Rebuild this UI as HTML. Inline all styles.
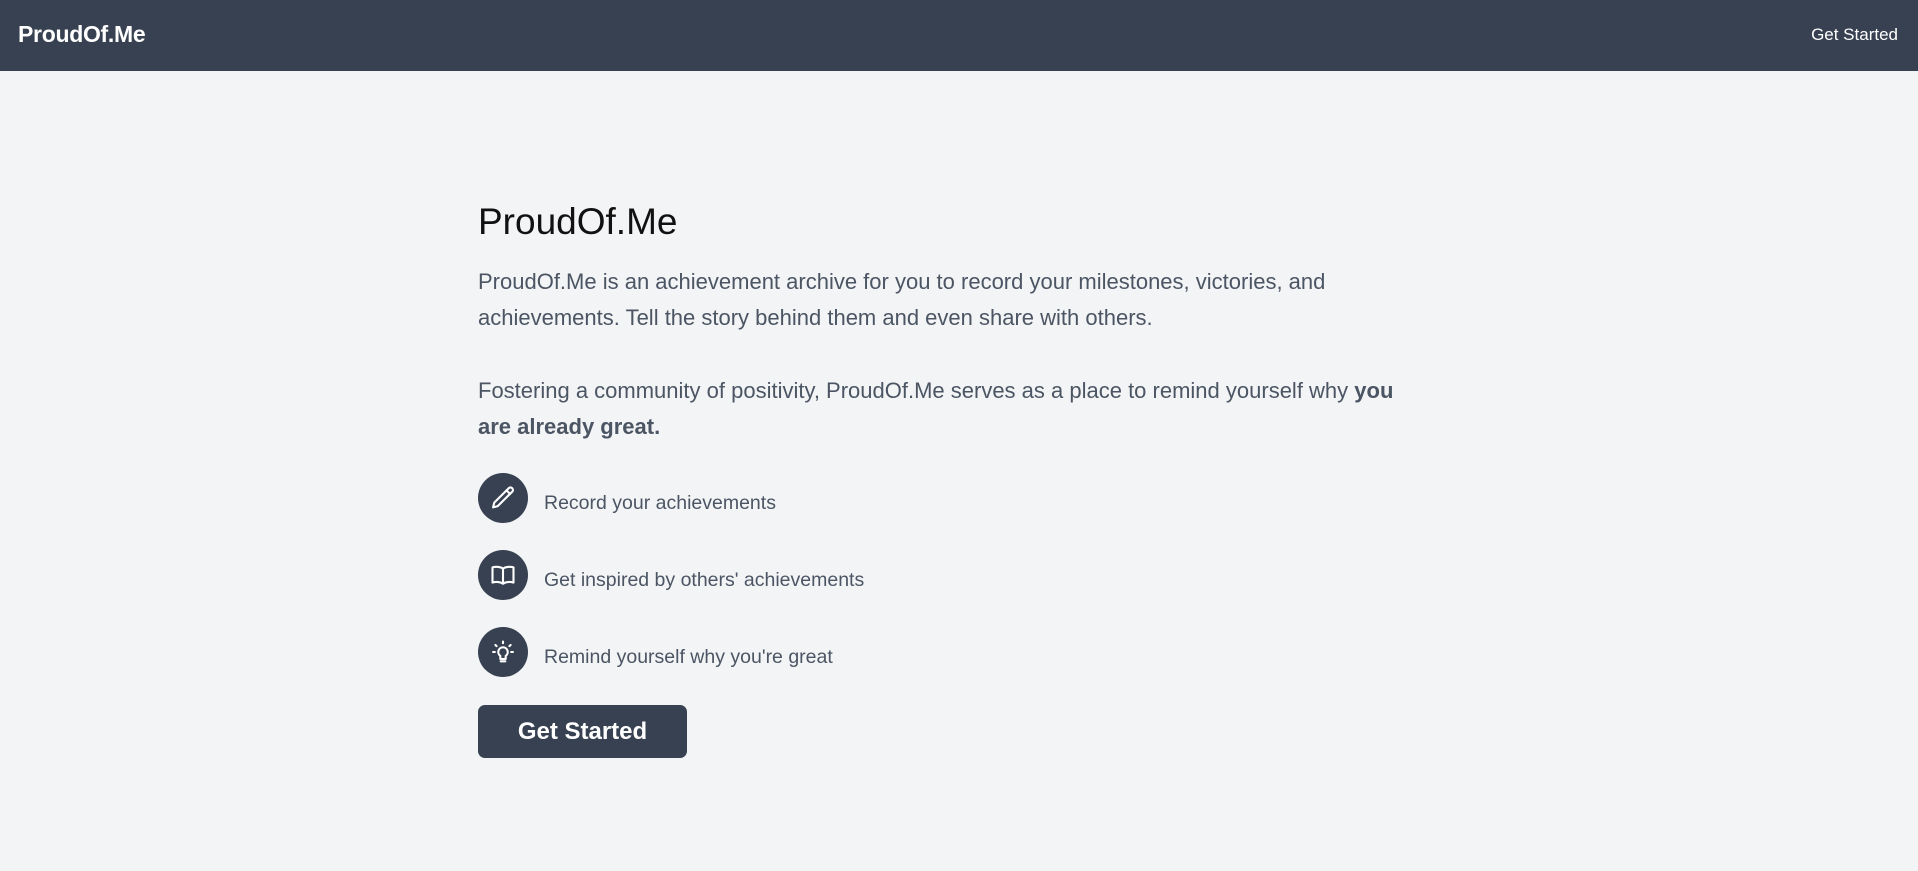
<!DOCTYPE html>
<html><head><meta charset="utf-8"><style>
*{margin:0;padding:0;box-sizing:border-box}
body{width:1918px;height:871px;background:#f3f4f6;font-family:"Liberation Sans",sans-serif;overflow:hidden}
.nav{height:71px;background:#374151;color:#fff;position:relative}
.logo{position:absolute;left:18px;top:21px;font-size:23px;font-weight:bold;letter-spacing:-0.3px}
.navr{position:absolute;right:20px;top:25px;font-size:17px}
.main{position:absolute;left:478px;top:0;white-space:nowrap}
h1{position:absolute;top:202px;font-size:37px;font-weight:normal;color:#111;letter-spacing:0;line-height:40px}
p{position:absolute;font-size:22px;line-height:36px;color:#4b5563}
.it{position:absolute;left:0;display:flex;align-items:center}
.c{width:50px;height:50px;border-radius:50%;background:#374151;display:flex;align-items:center;justify-content:center}
.it span{margin-left:16px;font-size:19.5px;color:#4b5563;position:relative;top:5px}
.btn{position:absolute;top:705px;left:0;width:209px;height:53px;background:#374151;border-radius:7px;color:#fff;font-weight:bold;font-size:24px;display:flex;align-items:center;justify-content:center}
</style></head><body>
<div class="nav"><div class="logo">ProudOf.Me</div><div class="navr">Get Started</div></div>
<div class="main">
<h1>ProudOf.Me</h1>
<p style="top:264px">ProudOf.Me is an achievement archive for you to record your milestones, victories, and<br>achievements. Tell the story behind them and even share with others.</p>
<p style="top:373px">Fostering a community of positivity, ProudOf.Me serves as a place to remind yourself why <b>you</b><br><b>are already great.</b></p>
<div class="it" style="top:473px"><div class="c"><svg width="28" height="28" viewBox="0 0 24 24" fill="none" stroke="#fff" stroke-width="1.8" stroke-linecap="round" stroke-linejoin="round"><path d="M16.9 3.6a2.1 2.1 0 0 1 3 3L7.5 19l-4 1 1-4z"/><path d="M15 5.5l3 3"/></svg></div><span>Record your achievements</span></div>
<div class="it" style="top:550px"><div class="c"><svg width="28" height="28" viewBox="0 0 24 24" fill="none" stroke="#fff" stroke-width="1.8" stroke-linejoin="round"><path d="M12 6.5C10 5 6 4.5 3 5.5v13c3-1 7-.5 9 1 2-1.5 6-2 9-1v-13c-3-1-7-.5-9 1z"/><path d="M12 6.5v13"/></svg></div><span>Get inspired by others' achievements</span></div>
<div class="it" style="top:627px"><div class="c"><svg width="28" height="28" viewBox="0 0 24 24" fill="none" stroke="#fff" stroke-width="1.8" stroke-linecap="round" stroke-linejoin="round"><path d="M12 8a4 4 0 0 0-2.3 7.3V18h4.6v-2.7A4 4 0 0 0 12 8z"/><path d="M10 20h4M12 3v1.5M5.5 6l1 1M18.5 6l-1 1M3.5 12h1.5M19 12h1.5"/></svg></div><span>Remind yourself why you're great</span></div>
<div class="btn">Get Started</div>
</div>
</body></html>
